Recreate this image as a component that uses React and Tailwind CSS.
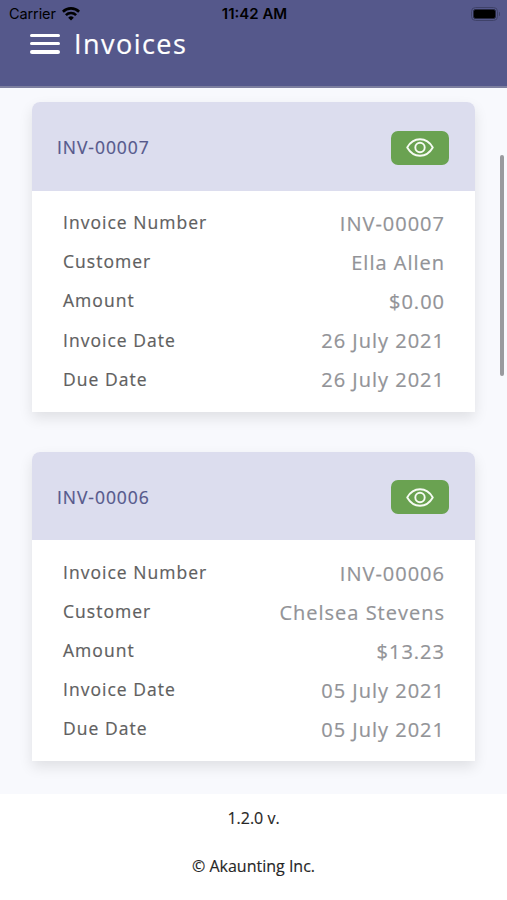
import React from 'react';

const invoices = [
    {
        number: 'INV-00007',
        customer: 'Ella Allen',
        amount: '$0.00',
        date: '26 July 2021',
        due: '26 July 2021',
    },
    {
        number: 'INV-00006',
        customer: 'Chelsea Stevens',
        amount: '$13.23',
        date: '05 July 2021',
        due: '05 July 2021',
    },
];

const WifiIcon = () => (
    <svg className="w-[18px] h-[14px]" viewBox="0 0 18 14" fill="none" stroke="black" strokeWidth="2.6">
        <path d="M.9 4.7a11.6 11.6 0 0 1 16.2 0" />
        <path d="M3.9 8.1a7.3 7.3 0 0 1 10.2 0" />
        <path d="M9 13.6 6.2 10.7a4 4 0 0 1 5.6 0z" fill="black" stroke="none" />
    </svg>
);

const EyeIcon = () => (
    <svg className="w-7 h-[19px]" viewBox="0 0 28 19" fill="none" stroke="#f6fbf3" strokeWidth="1.9">
        <path d="M1.2 9.5C4 4.6 8.6 1.3 14 1.3s10 3.3 12.8 8.2C24 14.4 19.4 17.7 14 17.7S4 14.4 1.2 9.5z" strokeLinejoin="round" />
        <circle cx="14" cy="9.5" r="4.7" />
    </svg>
);

const StatusBar = () => (
    <div className="h-7 pl-[9px] pr-[7px] grid grid-cols-3 items-center text-black font-['Inter',sans-serif]">
        <div className="flex items-center gap-1.5">
            <span className="w-[47px] text-[14.5px] tracking-[-0.1px] leading-none">Carrier</span>
            <WifiIcon />
        </div>
        <span className="pb-px text-center text-[15px] leading-none font-semibold">11:42 AM</span>
        <div className="flex items-center justify-end gap-px">
            <div className="w-[27px] h-[14px] p-px rounded-[4.5px] border border-[#3f4269]">
                <div className="w-full h-full bg-black rounded-[2.5px] border border-[#26283f]" />
            </div>
            <div className="w-[1.5px] h-1 bg-[#3f4269] rounded-r" />
        </div>
    </div>
);

const Row = ({ label, value }) => (
    <div className="h-[39.1px] flex items-center justify-between">
        <span className="text-[17.5px] tracking-[1.03px] text-[#5f5f5f] [-webkit-text-stroke:0.2px]">{label}</span>
        <span className="pt-0.5 text-[20px] tracking-[1px] text-[#929397] [-webkit-text-stroke:0.2px]">{value}</span>
    </div>
);

const InvoiceCard = ({ invoice }) => (
    <section className="h-[309.5px] rounded-t-lg bg-white shadow-[0_6px_14px_rgba(0,0,0,0.1)]">
        <div className="h-[88.5px] pl-[25px] pr-[26px] pt-[3px] flex items-center justify-between rounded-t-lg bg-[#dcddee]">
            <span className="text-[17.5px] tracking-[0.95px] text-[#55588b] [-webkit-text-stroke:0.2px]">{invoice.number}</span>
            <button className="w-[58px] h-[34px] flex items-center justify-center rounded-[7px] bg-[#6aa251]">
                <EyeIcon />
            </button>
        </div>
        <div className="pt-[13px] pl-[31px] pr-[30px]">
            <Row label="Invoice Number" value={invoice.number} />
            <Row label="Customer" value={invoice.customer} />
            <Row label="Amount" value={invoice.amount} />
            <Row label="Invoice Date" value={invoice.date} />
            <Row label="Due Date" value={invoice.due} />
        </div>
    </section>
);

const App = () => (
    <div className="relative w-full h-[900px] overflow-hidden flex flex-col bg-white font-['Open_Sans','Noto_Sans',sans-serif] leading-none">
        <header className="h-[88px] shrink-0 bg-[#55588b] border-b-2 border-[#7d7f9f]">
            <StatusBar />
            <div className="pl-[30px] h-[31px] flex items-center gap-[14px]">
                <button className="w-[30px] h-[20px] flex flex-col justify-between">
                    <span className="h-[3.5px] rounded-sm bg-white" />
                    <span className="h-[3.5px] rounded-sm bg-white" />
                    <span className="h-[3.5px] rounded-sm bg-white" />
                </button>
                <h1 className="text-[27px] tracking-[1.45px] text-white [-webkit-text-stroke:0.2px]">Invoices</h1>
            </div>
        </header>

        <main className="h-[706px] shrink-0 overflow-hidden pt-[14px] px-8 flex flex-col gap-10 bg-[#f8f9fd]">
            {invoices.map(invoice => (
                <InvoiceCard key={invoice.number} invoice={invoice} />
            ))}
        </main>

        <footer className="pt-4 flex flex-col items-center gap-8 text-base leading-none text-[#262626]">
            <p className="[-webkit-text-stroke:0.15px]">1.2.0 v.</p>
            <p className="[-webkit-text-stroke:0.15px]">© Akaunting Inc.</p>
        </footer>

        {/* Scroll indicator */}
        <div className="absolute right-[3px] top-[155px] w-1 h-[221px] rounded-full bg-[#999a9e]" />
    </div>
);

export default App;
